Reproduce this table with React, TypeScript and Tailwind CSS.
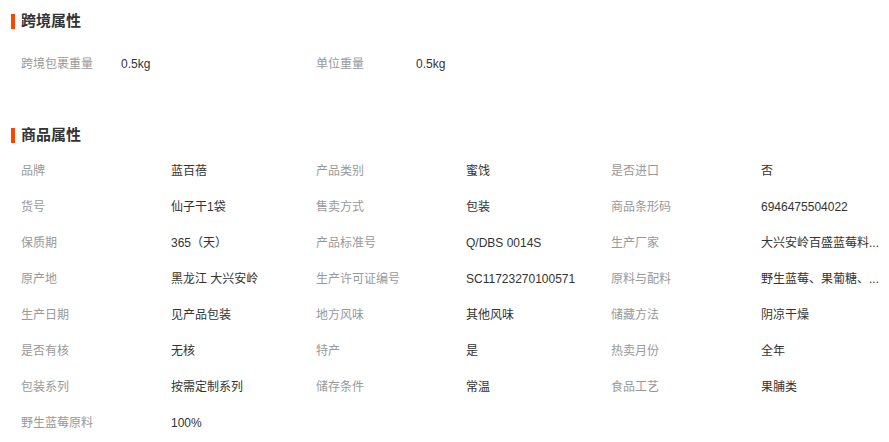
const CROSS_BORDER: [string, string][] = [
  ["跨境包裹重量", "0.5kg"],
  ["单位重量", "0.5kg"],
];

const PRODUCT: [string, string][] = [
  ["品牌", "蓝百蓓"],
  ["产品类别", "蜜饯"],
  ["是否进口", "否"],
  ["货号", "仙子干1袋"],
  ["售卖方式", "包装"],
  ["商品条形码", "6946475504022"],
  ["保质期", "365（天）"],
  ["产品标准号", "Q/DBS 0014S"],
  ["生产厂家", "大兴安岭百盛蓝莓料..."],
  ["原产地", "黑龙江 大兴安岭"],
  ["生产许可证编号", "SC11723270100571"],
  ["原料与配料", "野生蓝莓、果葡糖、..."],
  ["生产日期", "见产品包装"],
  ["地方风味", "其他风味"],
  ["储藏方法", "阴凉干燥"],
  ["是否有核", "无核"],
  ["特产", "是"],
  ["热卖月份", "全年"],
  ["包装系列", "按需定制系列"],
  ["储存条件", "常温"],
  ["食品工艺", "果脯类"],
  ["野生蓝莓原料", "100%"],
];

function Heading({ title }: { title: string }) {
  return (
    <div className="flex items-center h-[35px] pl-[11px]">
      <span className="w-[4px] h-[15px] bg-[#ff4400] mr-[6px]" />
      <h3 className="text-[15px] font-bold text-[#333]">{title}</h3>
    </div>
  );
}

export default function App() {
  return (
    <div
      className="w-[889px] h-[442px] bg-white overflow-hidden text-[12px]"
      style={{ fontFamily: '"Liberation Sans", "Noto Sans CJK SC", sans-serif' }}
    >
      {/* 跨境属性 */}
      <div className="pt-[4px]">
        <Heading title="跨境属性" />
        <ul className="mt-[7px] pl-[21px] grid grid-cols-[295px_295px]">
          {CROSS_BORDER.map(([k, v]) => (
            <li key={k} className="flex items-center h-[36px]">
              <span className="w-[100px] text-[#999]">{k}</span>
              <span className="text-[#333]">{v}</span>
            </li>
          ))}
        </ul>
      </div>

      {/* 商品属性 */}
      <div className="mt-[36px]">
        <Heading title="商品属性" />
        <ul className="pl-[21px] grid grid-cols-[295px_295px_295px]">
          {PRODUCT.map(([k, v]) => (
            <li key={k} className="flex items-center h-[36px]">
              <span className="w-[150px] shrink-0 text-[#999]">{k}</span>
              <span className="whitespace-nowrap text-[#333]">{v}</span>
            </li>
          ))}
        </ul>
      </div>
    </div>
  );
}
